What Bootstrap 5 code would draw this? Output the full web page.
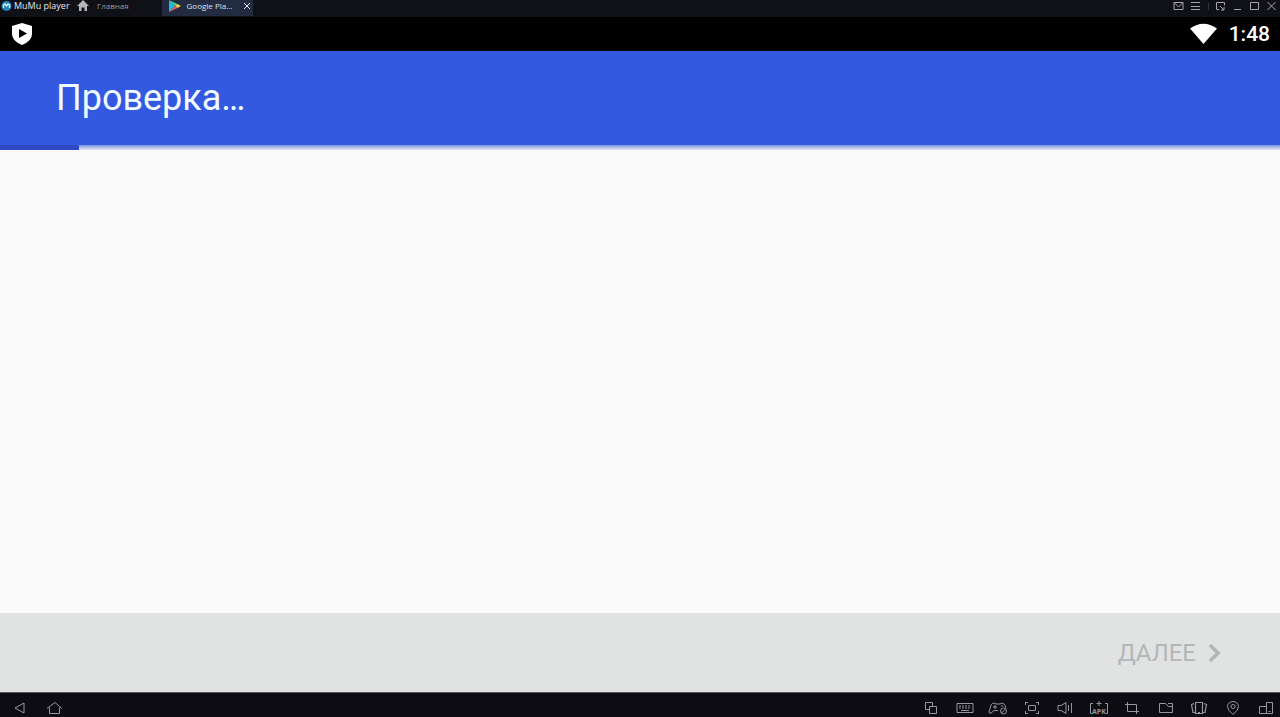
<!DOCTYPE html>
<html lang="ru">
<head>
<meta charset="utf-8">
<meta name="viewport" content="width=device-width, initial-scale=1">
<title>MuMu player</title>
<link href="https://cdn.jsdelivr.net/npm/bootstrap@5.3.0/dist/css/bootstrap.min.css" rel="stylesheet">
<style>
  body { font-family: Roboto, "Noto Sans", sans-serif; background: #fafafa; }
  svg { display: block; fill: none; stroke: currentColor; }
  .play-logo { stroke: none; }
  .icon-btn { border: 0; padding: 0; background: none; color: inherit; display: block; }
  .window-bar { height: 17px; background: #101017; color: #a3a3a8; font-family: "Open Sans", sans-serif; font-size: 8px; line-height: 12px; }
  .brand { font-size: 9px; font-weight: 500; color: #e6e6ea; gap: 2px; padding-left: 1px; width: 76px; }
  .home-tab { width: 86px; gap: 7px; color: #9a9a9f; text-decoration: none; }
  .app-tab { width: 91px; height: 16px; background: #232b40; color: #dfe2ea; font-weight: 500; padding: 0 2px 4px 6px; }
  .app-title { width: 52px; }
  .window-tools { padding-right: 2px; }
  .status-bar { height: 34px; background: #000; padding: 0 10px 0 12px; }
  .clock { font-size: 21px; font-weight: 500; line-height: 34px; }
  .page-head { height: 94px; background: #3359e0; padding-left: 56px; }
  .page-head h1 { font-size: 36px; line-height: 40px; font-weight: 400; color: #f0faff; }
  .load-track { height: 5px; border-radius: 0; background: linear-gradient(#7890df, #b3bfe9 50%, #e2e6f4); }
  .load-value { width: 6.2%; background: #3048c4; }
  .page-foot { height: 79px; background: #e1e3e3; padding-right: 56px; }
  .next-btn, .next-btn:disabled { border: 0; padding: 0; background: none; color: #b3b6b8; font-size: 24px; line-height: 32px; }
  .nav-strip { height: 25px; background: #0d0c13; color: #96969b; padding: 6px 5px 0 10px; border-top: 1px solid #55565a; }
  .tool-row { width: 353px; }
  .tool-row .icon-btn { width: 18px; }
  .tool-row svg { overflow: visible; }
  .apk-label { font: 700 7px "Open Sans", sans-serif; fill: currentColor; stroke: none; }
</style>
</head>
<body class="d-flex flex-column vh-100 overflow-hidden">
<header class="flex-shrink-0">
  <div class="window-bar d-flex align-items-start">
    <div class="brand d-flex align-items-center text-nowrap">
      <svg width="11" height="12" viewBox="0 0 11 12"><circle cx="5.500" cy="6" r="5" fill="#2385bb" stroke="none"/><path d="M2.500 8V5l1.500-1 1.500 2L7 4l1.500 1v3" stroke="#e4f4fc" stroke-width="1.300"/></svg>
      <span>MuMu player</span>
    </div>
    <a class="home-tab d-flex align-items-center" href="#">
      <svg width="14" height="12" viewBox="0 0 14 12"><path d="M7 0 13 6h-2v5H8.500V7.500h-3V11H3V6H1Z" fill="#b5b5b8" stroke="none"/></svg>
      <span>Главная</span>
    </a>
    <div class="app-tab d-flex align-items-center justify-content-between">
      <svg class="play-logo" width="14" height="12" viewBox="0 0 14 12"><path d="M1 0v12l6-6Z" fill="#20b8dc"/><path d="M1 0 9.500 4 7 6Z" fill="#42ce8c"/><path d="M9.500 4 13 6 9.500 8 7 6Z" fill="#f8cb45"/><path d="M1 12 7 6l2.500 2Z" fill="#e45a65"/></svg>
      <span class="app-title text-nowrap">Google Pla...</span>
      <button class="icon-btn" type="button" aria-label="Закрыть вкладку"><svg width="8" height="12" viewBox="0 0 8 12"><path d="m1 3 6 6m0-6L1 9"/></svg></button>
    </div>
    <div class="window-tools d-flex ms-auto">
      <button class="icon-btn me-1" type="button" aria-label="Почта"><svg width="13" height="12" viewBox="0 0 13 12"><path d="M2 2.500h9v7H2Zm0 0L6.500 7 11 2.500"/></svg></button>
      <button class="icon-btn" type="button" aria-label="Меню"><svg width="13" height="12" viewBox="0 0 13 12"><path d="M2 2.500h9M2 6.500h9M2 9.500h9"/></svg></button>
      <svg width="12" height="12" viewBox="0 0 12 12"><path d="M6.500 3v7" stroke="#34343b"/></svg>
      <button class="icon-btn me-1" type="button" aria-label="Мини-окно"><svg width="13" height="12" viewBox="0 0 13 12"><path d="M5 9.500H2.500v-7h8v3M6 6l4 4m0-3v3H7"/></svg></button>
      <button class="icon-btn me-1" type="button" aria-label="Свернуть"><svg width="13" height="12" viewBox="0 0 13 12"><path d="M3 9.500h7"/></svg></button>
      <button class="icon-btn me-1" type="button" aria-label="Развернуть"><svg width="13" height="12" viewBox="0 0 13 12"><path d="M2.500 2.500h8v7h-8Z"/></svg></button>
      <button class="icon-btn" type="button" aria-label="Закрыть"><svg width="13" height="12" viewBox="0 0 13 12"><path d="m2.500 2 8 8m0-8-8 8"/></svg></button>
    </div>
  </div>
  <div class="status-bar d-flex align-items-center justify-content-between text-white">
    <svg width="21" height="24" viewBox="0 0 21 24"><path d="M10 1 20 4v8q0 7-10 11Q0 19 0 12V4Z" fill="#fff" stroke="none"/><path d="M7 7v9l8-4.500Z" fill="#000" stroke="none"/></svg>
    <div class="d-flex align-items-center gap-2">
      <svg width="32" height="22" viewBox="0 0 32 22"><path d="M1 5.500Q14.500-4 28 5.500L14.500 21Z" fill="#fff" stroke="none"/></svg>
      <time class="clock">1:48</time>
    </div>
  </div>
  <div class="page-head d-flex align-items-center"><h1 class="m-0">Проверка…</h1></div>
  <div class="progress load-track" role="progressbar" aria-label="Проверка" aria-valuenow="6" aria-valuemin="0" aria-valuemax="100"><div class="progress-bar load-value"></div></div>
</header>
<main class="flex-grow-1"></main>
<footer class="flex-shrink-0">
  <div class="page-foot d-flex align-items-center justify-content-end">
    <button class="next-btn d-flex align-items-center gap-2" type="button" disabled>ДАЛЕЕ
      <svg width="20" height="24" viewBox="0 0 20 24"><path d="m6 4 8 8-8 8" stroke-width="3.500"/></svg>
    </button>
  </div>
  <nav class="nav-strip d-flex justify-content-between align-items-center" aria-label="Инструменты">
    <div class="d-flex gap-3">
      <button class="icon-btn" type="button" aria-label="Назад"><svg width="18" height="16" viewBox="0 0 18 16"><path d="M14 3v10L5 8Z"/></svg></button>
      <button class="icon-btn" type="button" aria-label="Домой"><svg width="20" height="16" viewBox="0 0 20 16"><path d="m3 8.500 8-6 7 6M5.500 7.500v6h10v-6"/></svg></button>
    </div>
    <div class="tool-row d-flex justify-content-between">
      <button class="icon-btn" type="button" aria-label="Несколько окон"><svg width="18" height="16" viewBox="0 0 18 16"><path d="M7 9.500H3.500v-7h7V6M7.500 6.500h7v7h-7Z"/></svg></button>
      <button class="icon-btn" type="button" aria-label="Клавиатура"><svg width="18" height="16" viewBox="0 0 18 16"><path d="M1 3.500h16v9H1Z"/><path d="M3 6h12M3 8h12" stroke-dasharray="2 1"/><path d="M5 10.500h8"/></svg></button>
      <button class="icon-btn" type="button" aria-label="Геймпад"><svg width="18" height="16" viewBox="1 0 18 16"><path d="M10 10.500H6L3 13q-2 1-2-1l2-7q1-2 3-2l2 1h4l2-1q3 0 4 5M5 7h4M7 5v4M13 6h2"/><circle cx="15.500" cy="11" r="3"/><path d="m13.500 13 4-4"/></svg></button>
      <button class="icon-btn" type="button" aria-label="Полный экран"><svg width="18" height="16" viewBox="0 0 18 16"><path d="M2.500 5V2.500H5m8 0h2.500V5m0 6v2.500H13m-8 0H2.500V11M5.500 5.500h7v5h-7Z"/></svg></button>
      <button class="icon-btn" type="button" aria-label="Громкость"><svg width="18" height="16" viewBox="0 0 18 16"><path d="M2 5.500h3l5-3v11l-5-3H2ZM12.500 5v6M15.500 3v10"/></svg></button>
      <button class="icon-btn" type="button" aria-label="Установить APK"><svg width="18" height="16" viewBox="1 0 18 16"><path d="M4 3.500H1.500v10H3M16 3.500h2.500v10H17M10 1v5M7.500 3.500h5"/><text class="apk-label" x="3" y="14">APK</text></svg></button>
      <button class="icon-btn" type="button" aria-label="Снимок экрана"><svg width="18" height="16" viewBox="0 0 18 16"><path d="M2 4.500h11.500V14M4.500 2v9.500H16"/></svg></button>
      <button class="icon-btn" type="button" aria-label="Общая папка"><svg width="18" height="16" viewBox="0 0 18 16"><path d="M2.500 3.500h6l3 3h4v6h-13ZM11 3.500h4.500v3"/></svg></button>
      <button class="icon-btn" type="button" aria-label="Встряхнуть"><svg width="18" height="16" viewBox="0 0 18 16"><path d="M5.500 2.500h7v11h-7ZM4 3.500l-2.500 1 1.500 8h2M14 3.500l2.500 1-1.500 8h-2M8 12.500h2" stroke-width="1.200"/></svg></button>
      <button class="icon-btn" type="button" aria-label="Местоположение"><svg width="18" height="16" viewBox="0 0 18 16"><path d="M9 14.500Q3.500 10 3.500 6.500a5.500 5 0 0 1 11 0Q14.500 10 9 14.500Z"/><circle cx="9" cy="6.500" r="2"/></svg></button>
      <button class="icon-btn" type="button" aria-label="Повернуть экран"><svg width="18" height="16" viewBox="0 0 18 16"><path d="M9.500 2.500h6v11h-6ZM9.500 6.500h-7v7h7M11.500 11.500h2"/></svg></button>
    </div>
  </nav>
</footer>
<script src="https://cdn.jsdelivr.net/npm/bootstrap@5.3.0/dist/js/bootstrap.bundle.min.js"></script>
</body>
</html>
